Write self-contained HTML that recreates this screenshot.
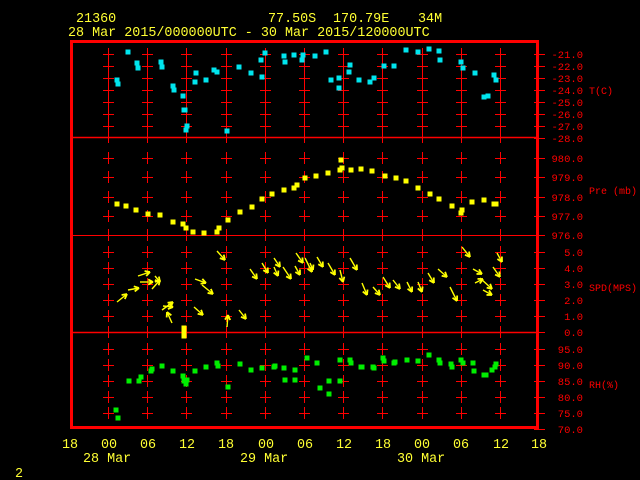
<!DOCTYPE html>
<html><head><meta charset="utf-8"><style>
html,body{margin:0;padding:0;background:#000;width:640px;height:480px;overflow:hidden}
svg{display:block}
text{font-family:"Liberation Mono",monospace}
</style></head><body>
<svg id="s" width="640" height="480" xmlns="http://www.w3.org/2000/svg">
<g fill="#ffff33" font-size="13.4">
<text x="76" y="22">21360</text>
<text x="268" y="22">77.50S</text>
<text x="333" y="22">170.79E</text>
<text x="418" y="22">34M</text>
<text x="68" y="36">28 Mar 2015/000000UTC - 30 Mar 2015/120000UTC</text>
<text x="62" y="448">18</text><text x="101" y="448">00</text><text x="140" y="448">06</text><text x="179" y="448">12</text><text x="218" y="448">18</text><text x="258" y="448">00</text><text x="297" y="448">06</text><text x="336" y="448">12</text><text x="375" y="448">18</text><text x="414" y="448">00</text><text x="453" y="448">06</text><text x="493" y="448">12</text><text x="531" y="448">18</text>
<text x="83" y="462">28 Mar</text><text x="240" y="462">29 Mar</text><text x="397" y="462">30 Mar</text>
<text x="15" y="477">2</text>
</g>
<g id="g"></g>
</svg>
<script>
var g=document.getElementById('g'),h='';
function L(a,b,c,d,col,w){h+='<line x1="'+a+'" y1="'+b+'" x2="'+c+'" y2="'+d+'" stroke="'+col+'" stroke-width="'+(w||1)+'"/>';}
function R(x,y,col,w,hh){w=w||5;hh=hh||5;h+='<rect x="'+(x-w/2)+'" y="'+(y-hh/2)+'" width="'+w+'" height="'+hh+'" fill="'+col+'"/>';}
var red='#ff0000';
var xs=[];for(var k=0;k<11;k++)xs.push(Math.round(108+39.2*k));
var T=[54,66,78,90,102,114,126],P=[158,177,197,216],S=[252,268,284,300,316],H=[349,365,381,397,413];
L(71,137.5,538,137.5,red,1.5);L(71,235.5,538,235.5,red,1);L(71,332.5,538,332.5,red,1.5);
xs.forEach(function(x){
 T.concat(P,S,H).forEach(function(y){L(x+.5,y-6,x+.5,y+6,red);L(x-5,y+.5,x+6,y+.5,red);});
 [137,235,332].forEach(function(y){L(x+.5,y-6,x+.5,y+6,red);});
});
h+='<rect x="71.5" y="41.5" width="466" height="386" fill="none" stroke="'+red+'" stroke-width="3"/>';
var lab=[[54,'-21.0'],[66,'-22.0'],[78,'-23.0'],[90,'-24.0'],[102,'-25.0'],[114,'-26.0'],[126,'-27.0'],[138,'-28.0'],
[158,'980.0'],[177,'979.0'],[197,'978.0'],[216,'977.0'],[235,'976.0'],
[252,'5.0'],[268,'4.0'],[284,'3.0'],[300,'2.0'],[316,'1.0'],[332,'0.0'],
[349,'95.0'],[365,'90.0'],[381,'85.0'],[397,'80.0'],[413,'75.0'],[429,'70.0']];
lab.forEach(function(a){L(534,a[0]+.5,545,a[0]+.5,red);
 h+='<text x="583" y="'+(a[0]+4)+'" fill="'+red+'" font-size="10.5" text-anchor="end">'+a[1]+'</text>';});
[[90,'T(C)'],[190,'Pre (mb)'],[287,'SPD(MPS)'],[384,'RH(%)']].forEach(function(a){
 h+='<text x="589" y="'+(a[0]+4)+'" fill="'+red+'" font-size="10">'+a[1]+'</text>';});
[[117,80],[118,84],[128,52],[137,63],[138,68],[161,62],[162,67],[173,86],[174,90],[183,96],[186,130],[187,126],[184,110],[185,110],[196,73],[195,82],[206,80],[214,70],[217,72],[227,131],[239,67],[251,73],[262,77],[261,60],[265,53],[284,56],[285,62],[294,55],[303,55],[302,60],[315,56],[326,52],[331,80],[339,78],[339,88],[350,65],[349,72],[359,80],[370,82],[374,78],[384,66],[394,66],[406,50],[418,52],[429,49],[439,51],[440,60],[461,62],[463,68],[475,73],[484,97],[488,96],[494,75],[496,80]].forEach(function(p){R(p[0],p[1],'#00e5ee');});
[[117,204],[126,206],[136,210],[148,214],[160,215],[173,222],[183,224],[186,228],[193,232],[204,233],[217,232],[219,228],[228,220],[240,212],[252,207],[262,199],[272,194],[284,190],[294,188],[297,185],[305,178],[316,176],[328,173],[340,170],[341,160],[342,168],[351,170],[361,169],[372,171],[385,176],[396,178],[406,181],[418,188],[430,194],[439,199],[452,206],[461,213],[462,210],[472,202],[484,200],[494,204],[496,204]].forEach(function(p){R(p[0],p[1],'#ffff00');});
R(184,332,'#ffff00',5,13);
var Y='#ffff00';
[[117,302,127,294],[128,290,139,288],[138,276,150,272],[140,282,153,282],[152,289,160,280],[155,276,160,282],[162,310,173,302],[172,323,167,312],[163,306,173,307],[195,279,206,283],[202,285,213,294],[194,307,203,315],[217,251,225,260],[227,327,228,315],[239,310,246,319],[250,269,257,279],[262,263,268,273],[274,258,280,267],[274,267,278,276],[283,267,291,279],[295,266,300,275],[296,253,303,263],[305,258,312,272],[317,257,323,267],[310,263,313,270],[328,263,335,275],[340,270,343,282],[350,258,357,270],[362,283,367,295],[373,287,380,295],[383,277,390,288],[393,280,400,289],[407,282,412,292],[418,282,422,292],[428,273,434,283],[438,269,447,277],[450,287,457,301],[462,247,470,257],[473,269,482,274],[475,283,483,279],[480,278,492,289],[483,290,492,295],[493,267,500,277],[497,253,502,262]].forEach(function(a){
 var dx=a[2]-a[0],dy=a[3]-a[1],l=Math.sqrt(dx*dx+dy*dy),ux=dx/l,uy=dy/l,s=5.5;
 L(a[0],a[1],a[2],a[3],Y,1.4);
 var c=Math.cos(2.65),sn=Math.sin(2.65);
 var p1=[a[2]+s*(ux*c-uy*sn),a[3]+s*(ux*sn+uy*c)],p2=[a[2]+s*(ux*c+uy*sn),a[3]+s*(-ux*sn+uy*c)];
 L(a[2],a[3],p1[0],p1[1],Y,1.8);L(a[2],a[3],p2[0],p2[1],Y,1.8);
});
[[116,410],[118,418],[129,381],[139,381],[141,377],[151,371],[152,369],[162,366],[173,371],[183,376],[184,381],[186,384],[187,380],[195,371],[206,367],[217,363],[218,366],[228,387],[240,364],[251,370],[262,368],[274,367],[275,366],[284,368],[285,380],[295,370],[295,380],[307,358],[317,363],[320,388],[329,381],[329,394],[340,381],[340,360],[350,360],[351,363],[361,367],[362,367],[373,367],[374,368],[383,358],[384,361],[394,363],[395,362],[407,360],[418,361],[429,355],[439,360],[440,363],[451,364],[452,367],[461,360],[463,363],[473,363],[474,371],[484,375],[486,375],[492,370],[495,367],[496,364]].forEach(function(p){R(p[0],p[1],'#00ee00');});
g.innerHTML=h;
</script>
</body></html>
